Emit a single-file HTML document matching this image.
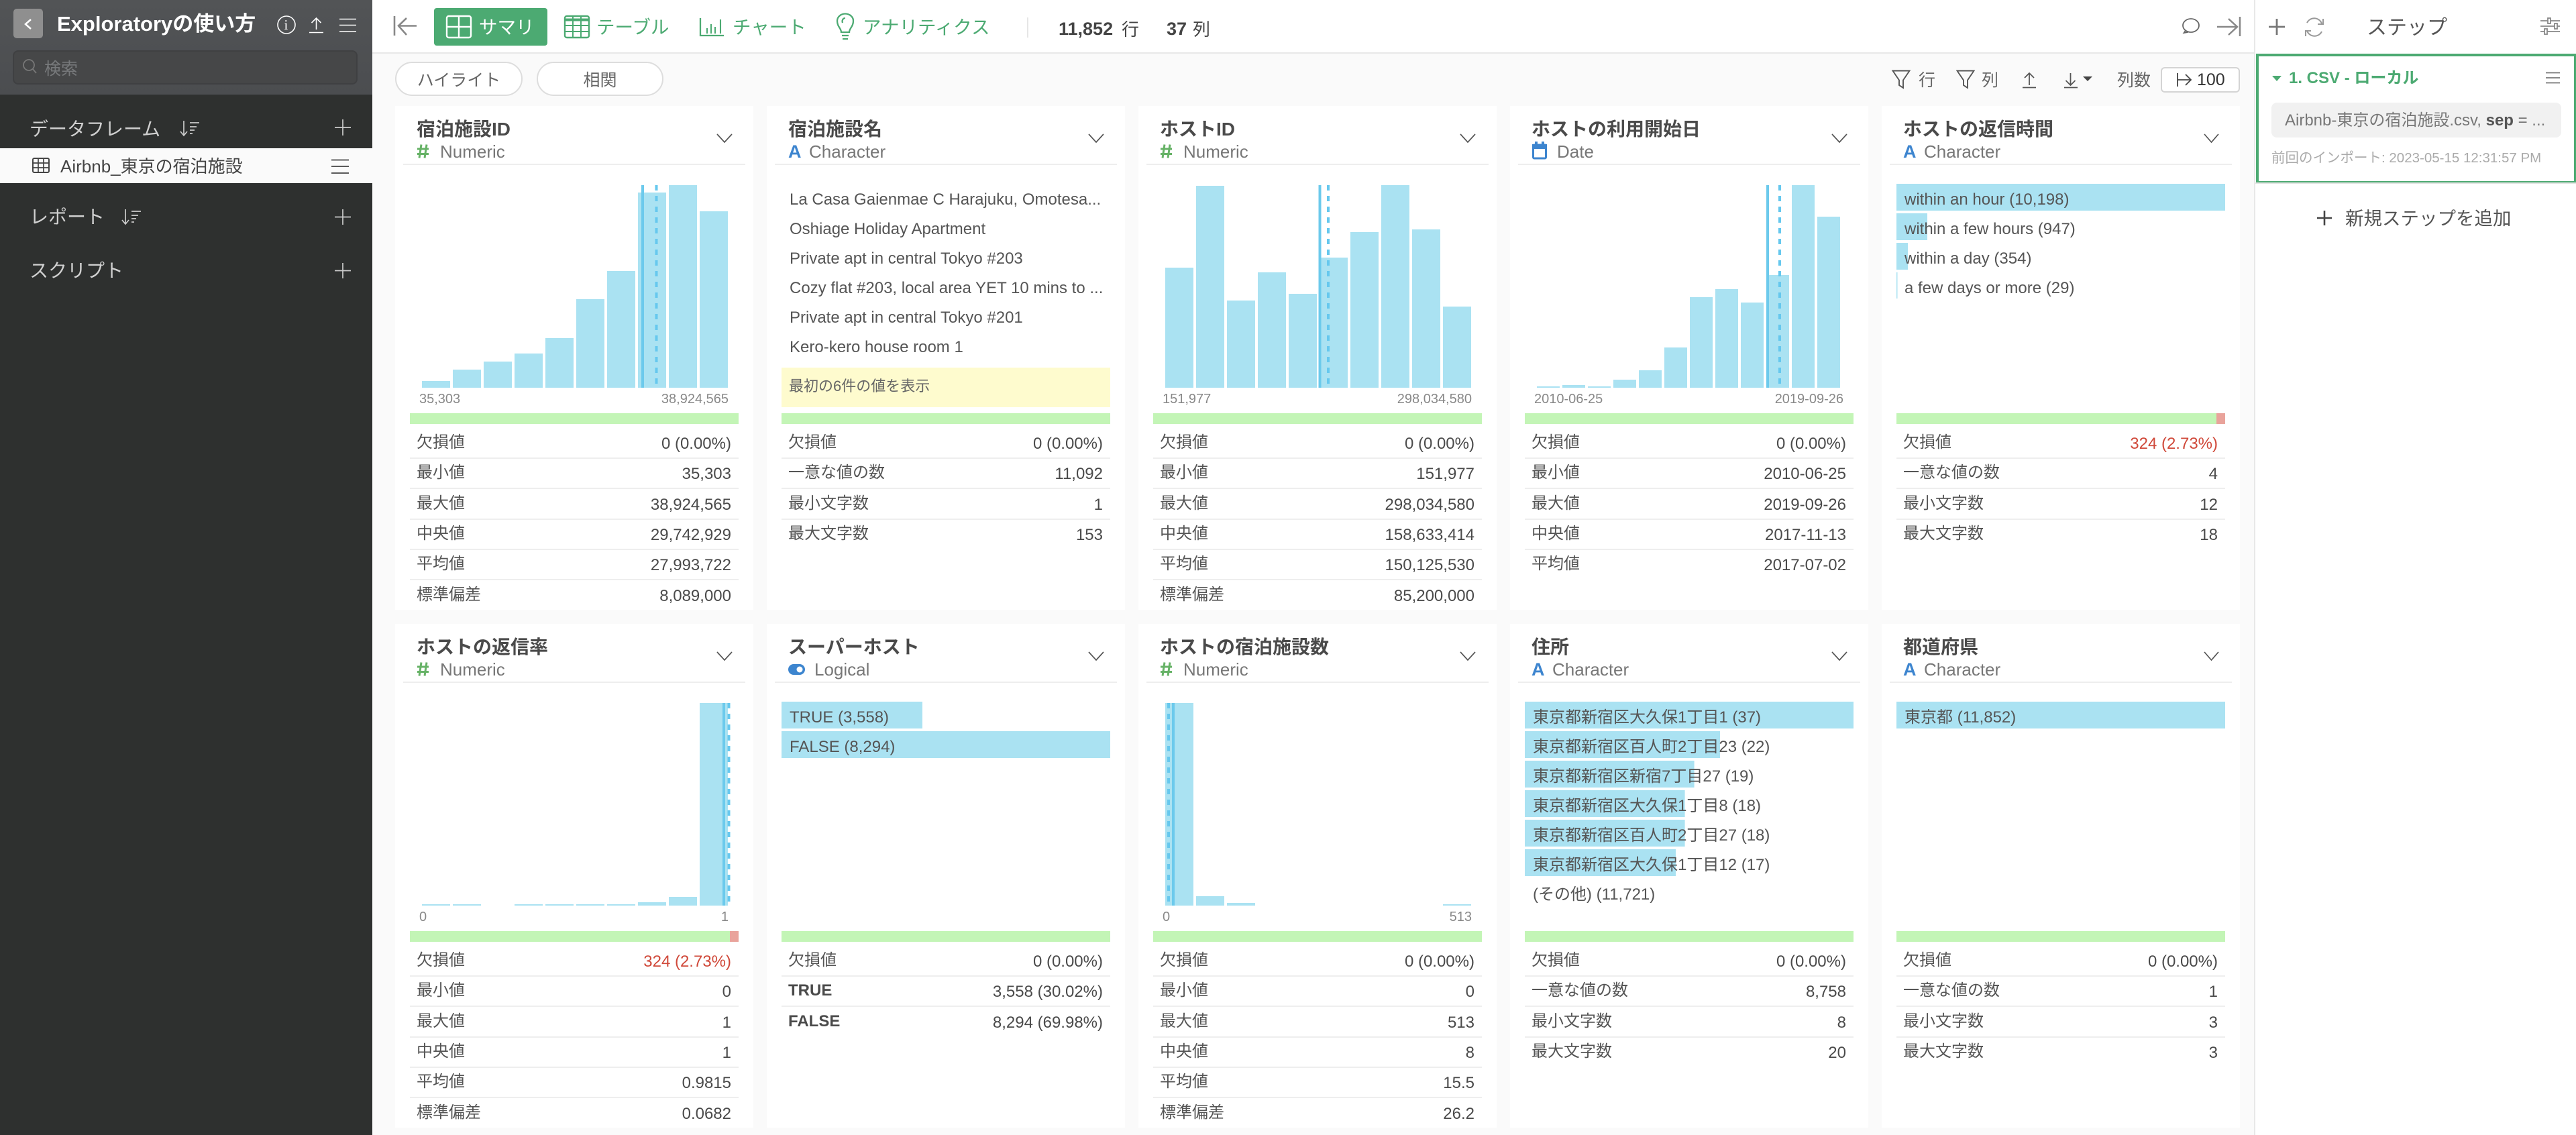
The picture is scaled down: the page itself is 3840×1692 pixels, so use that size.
<!DOCTYPE html>
<html lang="ja"><head><meta charset="utf-8"><title>Exploratory</title>
<style>
html,body{margin:0;padding:0;width:3840px;height:1692px;overflow:hidden;background:#fafafa}
body{position:relative;font-family:"Liberation Sans","Noto Sans CJK JP",sans-serif;color:#555}
.bg,.t,.c,.pill,svg.top{position:absolute}
.t{white-space:nowrap;line-height:40px}
svg.top{left:0;top:0;z-index:1}
.t,.pill,.c{z-index:2}
.c{width:534px;height:751px;background:#fff}
.c svg{position:absolute;left:0;top:0}
.c::before{content:"";position:absolute;left:12px;width:510px;top:86px;height:2px;background:#eee}
.tt{position:absolute;left:32px;top:15px;font-size:28px;font-weight:700;line-height:40px;color:#4a4a4a;white-space:nowrap}
.ty{position:absolute;top:50.5px;font-size:26px;line-height:34px;color:#777;white-space:nowrap}
.A{position:absolute;left:32px;top:50.5px;font-size:27px;line-height:34px;font-weight:700;color:#3d85cf}
.x{position:absolute;top:425px;font-size:20px;line-height:24px;color:#888;white-space:nowrap}
.x.e{right:37px}.x.s{left:36px}
.li{position:absolute;left:34px;margin-top:2px;font-size:24px;line-height:44px;color:#555;white-space:nowrap}
.y{position:absolute;left:22px;top:390px;width:479px;height:59px;padding-left:11px;background:#fefbce;font-size:22px;line-height:56px;color:#666;white-space:nowrap}
.g{position:absolute;left:22px;top:458px;width:490px;height:16px;background:#c3f5b6}
.g i{position:absolute;right:0;top:0;width:13px;height:16px;background:#e9a39b}
.r{position:absolute;left:22px;width:490px;height:45px;font-size:24px;line-height:44px;color:#4a4a4a}
.r::after{content:"";position:absolute;left:0;right:0;top:43px;height:2px;background:#eee}
.r:last-child::after{display:none}
.r span{position:absolute;left:10px;top:-1px;color:#555;white-space:nowrap}
.r b{position:absolute;left:10px;top:-1px;color:#4a4a4a}
.r u{position:absolute;right:11px;top:1px;text-decoration:none;white-space:nowrap}
.r u.red{color:#d0493a}
.a1{top:481px}.a2{top:526.3px}.a3{top:571.6px}.a4{top:617px}.a5{top:662.2px}.a6{top:707.5px}
.b{fill:#aae2f2}
.m{stroke:#6ccaec;stroke-width:4;fill:none}
.d{stroke:#66c8ee;stroke-width:4;stroke-dasharray:8 8;fill:none}
.ch{fill:none;stroke:#555;stroke-width:1.7}
.h{fill:none;stroke:#66b266;stroke-width:3;transform:translateY(-1.5px)}
.pill{top:92px;height:47px;border:2px solid #ddd;border-radius:26px;background:#fff;display:flex;align-items:center;justify-content:center;font-size:25px;color:#666;box-sizing:content-box}
</style></head><body>

<div class="bg" style="left:0;top:0;width:555px;height:1692px;background:#2e302f"></div>
<div class="bg" style="left:0;top:0;width:555px;height:141px;background:linear-gradient(#525456,#4b4d50)"></div>
<div class="bg" style="left:19px;top:75px;width:510px;height:47px;background:#464748;border:2px solid #3f4042;border-radius:8px"></div>
<div class="bg" style="left:0;top:221px;width:555px;height:52px;background:#fafafa"></div>
<div class="bg" style="left:555px;top:0;width:2805px;height:78px;background:#fff"></div>
<div class="bg" style="left:555px;top:78px;width:2808px;height:2px;background:#e8e8e8"></div>
<div class="bg" style="left:3360px;top:0;width:480px;height:1692px;background:#fff;border-left:2px solid #e8e8e8;box-sizing:border-box"></div>
<div class="bg" style="left:3363px;top:80px;width:477px;height:194px;box-sizing:border-box;border:4px solid #4caa72;background:#fff;border-right-width:3px"></div>
<div class="bg" style="left:3362px;top:272px;width:478px;height:2px;background:#e4e4e4"></div>
<div class="bg" style="left:3386px;top:153px;width:432px;height:52px;background:#f1f1f1;border-radius:8px"></div>
<div class="bg" style="left:647px;top:12px;width:169px;height:56px;background:#4caa72;border-radius:4px"></div>
<div class="bg" style="left:20px;top:13px;width:44px;height:44px;background:#8f8f8f;border-radius:5px"></div>
<div class="bg" style="left:3221px;top:100px;width:118px;height:38px;box-sizing:border-box;background:#fff;border:2px solid #d4d4d4;border-radius:6px"></div>

<svg class="top" width="3840" height="1692" viewBox="0 0 3840 1692" fill="none">
 <polyline points="46,29 38,36 46,43" stroke="#fff" stroke-width="2.5"/>
 <circle cx="427" cy="37" r="13" stroke="#fff" stroke-width="1.6"/>
 <path d="M471.5 44V27M464.5 34l7-7 7 7M461 48.5h21" stroke="#fff" stroke-width="1.6"/>
 <path d="M506 28.5h25M506 37.5h25M506 47h25" stroke="#fff" stroke-width="1.6"/>
 <circle cx="43" cy="97" r="8" stroke="#777" stroke-width="1.8"/><path d="M49 103l5 6" stroke="#777" stroke-width="1.8"/>
 <g stroke="#ccc" stroke-width="1.7">
  <path d="M274 180v22M269 196l5 6 5-6M283 183h14M283 189h10M283 194h7M283 199h4"/>
  <path d="M187 312v22M182 328l5 6 5-6M196 315h14M196 321h10M196 326h7M196 331h4"/>
  <path d="M499 190h24M511 178v24"/>
  <path d="M499 323.5h24M511 312v23"/>
  <path d="M499 403.5h24M511 392v23"/>
 </g>
 <rect x="49" y="236" width="24" height="21" rx="2" stroke="#444" stroke-width="2"/>
 <path d="M49 243h24M49 250h24M57 236v21M65 236v21" stroke="#444" stroke-width="1.7"/>
 <path d="M494 238.5h26M494 248h26M494 258h26" stroke="#444" stroke-width="1.7"/>

 <path d="M588 24v29M621 38.5h-26M606 27l-12 11.5 12 13.5" stroke="#888" stroke-width="2.6"/>
 <rect x="666" y="24" width="36" height="32" rx="3" stroke="#fff" stroke-width="2.4"/>
 <path d="M684 24v32M666 40h36" stroke="#fff" stroke-width="2.4"/>
 <rect x="842" y="24" width="36" height="32" rx="3" stroke="#4caa72" stroke-width="2.4"/>
 <path d="M842 29.5h36" stroke="#4caa72" stroke-width="4"/>
 <path d="M854 25v31M866 25v31M842 38h36M842 47h36" stroke="#4caa72" stroke-width="2"/>
 <path d="M1044 27v26h35" stroke="#4caa72" stroke-width="2.3"/>
 <path d="M1054 42v8M1060 36v14M1066 40v10M1074 29v21" stroke="#4caa72" stroke-width="2.1"/>
 <path d="M1254 48c0-6-6-8-6-17a12 10.5 0 0 1 24 0c0 9-6 11-6 17zM1255 53h10M1256 58h8M1260 27c-4 0-5 4-4 7" stroke="#4caa72" stroke-width="2.3"/>
 <path d="M1532 26v30" stroke="#ddd" stroke-width="1.5"/>

 <ellipse cx="3266" cy="38" rx="12" ry="10" stroke="#666" stroke-width="1.8"/>
 <path d="M3258 45.5l-2.5 3.5 6-1" stroke="#666" stroke-width="1.8"/>
 <path d="M3305 40h30M3322 28l13 12-13 12M3339 25v29" stroke="#888" stroke-width="2.5"/>

 <path d="M2821.5 105.5h25l-9.5 14v11.5l-6-4v-7.5z" stroke="#555" stroke-width="1.9"/>
 <path d="M2917.5 105.5h25l-9.5 14v11.5l-6-4v-7.5z" stroke="#555" stroke-width="1.9"/>
 <path d="M3025 127v-18M3018 116l7-7 7 7M3015 130.5h20" stroke="#555" stroke-width="1.8"/>
 <path d="M3086.5 109v18M3079.5 120l7 7 7-7M3077 130.5h20" stroke="#555" stroke-width="1.8"/>
 <path d="M3105 114h14l-7 7z" fill="#444"/>
 <path d="M3246 109v20M3246 119h19M3258 111l8 8-8 8" stroke="#444" stroke-width="1.8"/>

 <path d="M3382 40h24M3394 28v24" stroke="#777" stroke-width="2.8"/>
 <path d="M3461 35a12 12 0 0 0-22-1M3439 46a12 12 0 0 0 22 1M3463 28v8h-8M3437 54v-8h8" stroke="#999" stroke-width="2"/>
 <g stroke="#888" stroke-width="1.8"><path d="M3787 31h29M3787 39h29M3787 47h29"/>
  <rect x="3798" y="27" width="4" height="8" fill="#fff"/><rect x="3808" y="35" width="4" height="8" fill="#fff"/><rect x="3793" y="43" width="4" height="8" fill="#fff"/></g>
 <path d="M3387 113h14l-7 8z" fill="#4caa72"/>
 <path d="M3795 108.5h21M3795 116h21M3795 123.5h21" stroke="#777" stroke-width="1.8"/>
 <path d="M3454 325h22M3465 314v22" stroke="#444" stroke-width="2.6"/>
</svg>

<div class="t" style="left:85px;top:16px;font-size:31px;font-weight:700;color:#fff">Exploratoryの使い方</div>
<div class="t" style="left:423.5px;top:17px;font-size:21px;font-family:'Liberation Serif',serif;color:#fff">i</div>
<div class="t" style="left:66px;top:83px;font-size:25px;color:#77797b">検索</div>
<div class="t" style="left:44px;top:173px;font-size:28px;color:#d0d0d0">データフレーム</div>
<div class="t" style="left:90px;top:228px;font-size:26px;color:#444">Airbnb_東京の宿泊施設</div>
<div class="t" style="left:44px;top:304px;font-size:28px;color:#d0d0d0">レポート</div>
<div class="t" style="left:44px;top:384px;font-size:28px;color:#d0d0d0">スクリプト</div>

<div class="t" style="left:714px;top:21px;font-size:27.5px;color:#fff">サマリ</div>
<div class="t" style="left:889px;top:21px;font-size:27.5px;color:#4caa72">テーブル</div>
<div class="t" style="left:1092px;top:21px;font-size:27.5px;color:#4caa72">チャート</div>
<div class="t" style="left:1286px;top:21px;font-size:27.5px;color:#4caa72">アナリティクス</div>
<div class="t" style="left:1578px;top:23px;font-size:27px;font-weight:700;color:#444">11,852</div>
<div class="t" style="left:1672px;top:24px;font-size:26px;color:#444">行</div>
<div class="t" style="left:1739px;top:23px;font-size:27px;font-weight:700;color:#444">37</div>
<div class="t" style="left:1778px;top:24px;font-size:26px;color:#444">列</div>

<div class="pill" style="left:589px;width:186px">ハイライト</div>
<div class="pill" style="left:800px;width:185px">相関</div>
<div class="t" style="left:2860px;top:100px;font-size:25px;color:#666">行</div>
<div class="t" style="left:2954px;top:100px;font-size:25px;color:#666">列</div>
<div class="t" style="left:3156px;top:100px;font-size:25px;color:#666">列数</div>
<div class="t" style="left:3275px;top:99px;font-size:25px;color:#333">100</div>

<div class="t" style="left:3528px;top:22px;font-size:30px;color:#555">ステップ</div>
<div class="t" style="left:3412px;top:97px;font-size:24px;font-weight:700;color:#4caa72">1. CSV - ローカル</div>
<div class="t" style="left:3406px;top:160px;font-size:24px;color:#777">Airbnb-東京の宿泊施設.csv, <b style="color:#555">sep</b> = ...</div>
<div class="t" style="left:3386px;top:216px;font-size:20.5px;color:#aaa">前回のインポート: 2023-05-15 12:31:57 PM</div>
<div class="t" style="left:3496px;top:306px;font-size:27.5px;color:#555">新規ステップを追加</div>

<!-- Row 1 -->
<div class="c" style="left:589px;top:158px">
<svg width="534" height="751"><polyline class="ch" points="480,42 491,54 502,42"/>
<path class="h" d="M39 59l-3 20M47 59l-3 20M33 65.5h17M33 73h17"/>
<rect class="b" x="40" y="410" width="42" height="10"/><rect class="b" x="86" y="393" width="42" height="27"/><rect class="b" x="132" y="381" width="42" height="39"/><rect class="b" x="178" y="369" width="42" height="51"/><rect class="b" x="224" y="346" width="42" height="74"/><rect class="b" x="270" y="288" width="42" height="132"/><rect class="b" x="316" y="246" width="42" height="174"/><rect class="b" x="362" y="129" width="42" height="291"/><rect class="b" x="408" y="118" width="42" height="302"/><rect class="b" x="454" y="157" width="42" height="263"/>
<path class="m" d="M369 118v302"/><path class="d" d="M389.5 118v302"/></svg>
<div class="tt">宿泊施設ID</div><div class="ty" style="left:67px">Numeric</div>
<div class="x s">35,303</div><div class="x e">38,924,565</div><div class="g"></div>
<div class="r a1"><span>欠損値</span><u>0 (0.00%)</u></div>
<div class="r a2"><span>最小値</span><u>35,303</u></div>
<div class="r a3"><span>最大値</span><u>38,924,565</u></div>
<div class="r a4"><span>中央値</span><u>29,742,929</u></div>
<div class="r a5"><span>平均値</span><u>27,993,722</u></div>
<div class="r a6"><span>標準偏差</span><u>8,089,000</u></div>
</div>

<div class="c" style="left:1143px;top:158px">
<svg width="534" height="751"><polyline class="ch" points="480,42 491,54 502,42"/></svg>
<div class="tt">宿泊施設名</div><div class="A">A</div><div class="ty" style="left:63px">Character</div>
<div class="li" style="top:116px">La Casa Gaienmae C Harajuku, Omotesa...</div>
<div class="li" style="top:160px">Oshiage Holiday Apartment</div>
<div class="li" style="top:204px">Private apt in central Tokyo #203</div>
<div class="li" style="top:248px">Cozy flat #203, local area YET 10 mins to ...</div>
<div class="li" style="top:292px">Private apt in central Tokyo #201</div>
<div class="li" style="top:336px">Kero-kero house room 1</div>
<div class="y">最初の6件の値を表示</div><div class="g"></div>
<div class="r a1"><span>欠損値</span><u>0 (0.00%)</u></div>
<div class="r a2"><span>一意な値の数</span><u>11,092</u></div>
<div class="r a3"><span>最小文字数</span><u>1</u></div>
<div class="r a4"><span>最大文字数</span><u>153</u></div>
</div>

<div class="c" style="left:1697px;top:158px">
<svg width="534" height="751"><polyline class="ch" points="480,42 491,54 502,42"/>
<path class="h" d="M39 59l-3 20M47 59l-3 20M33 65.5h17M33 73h17"/>
<rect class="b" x="40" y="241" width="42" height="179"/><rect class="b" x="86" y="119" width="42" height="301"/><rect class="b" x="132" y="290" width="42" height="130"/><rect class="b" x="178" y="248" width="42" height="172"/><rect class="b" x="224" y="280" width="42" height="140"/><rect class="b" x="270" y="226" width="42" height="194"/><rect class="b" x="316" y="188" width="42" height="232"/><rect class="b" x="362" y="118" width="42" height="302"/><rect class="b" x="408" y="184" width="42" height="236"/><rect class="b" x="454" y="299" width="42" height="121"/>
<path class="m" d="M270.5 118v302"/><path class="d" d="M283 118v302"/></svg>
<div class="tt">ホストID</div><div class="ty" style="left:67px">Numeric</div>
<div class="x s">151,977</div><div class="x e">298,034,580</div><div class="g"></div>
<div class="r a1"><span>欠損値</span><u>0 (0.00%)</u></div>
<div class="r a2"><span>最小値</span><u>151,977</u></div>
<div class="r a3"><span>最大値</span><u>298,034,580</u></div>
<div class="r a4"><span>中央値</span><u>158,633,414</u></div>
<div class="r a5"><span>平均値</span><u>150,125,530</u></div>
<div class="r a6"><span>標準偏差</span><u>85,200,000</u></div>
</div>

<div class="c" style="left:2251px;top:158px">
<svg width="534" height="751"><polyline class="ch" points="480,42 491,54 502,42"/>
<rect x="34.5" y="58" width="19" height="20" rx="1.5" fill="#fff" stroke="#3d85cf" stroke-width="3"/>
<path d="M33 57h22v7H33zM37 53h4v5h-4zM47 53h4v5h-4z" fill="#3d85cf"/>
<rect class="b" x="40" y="418" width="34" height="2"/><rect class="b" x="78" y="416" width="34" height="4"/><rect class="b" x="116" y="418" width="34" height="2"/><rect class="b" x="154" y="408" width="34" height="12"/><rect class="b" x="192" y="394" width="34" height="26"/><rect class="b" x="230" y="360" width="34" height="60"/><rect class="b" x="268" y="285" width="34" height="135"/><rect class="b" x="306" y="273" width="34" height="147"/><rect class="b" x="344" y="293" width="34" height="127"/><rect class="b" x="382" y="252" width="34" height="168"/><rect class="b" x="420" y="118" width="34" height="302"/><rect class="b" x="458" y="165" width="34" height="255"/>
<path class="m" d="M384 118v302"/><path class="d" d="M402 118v302"/></svg>
<div class="tt">ホストの利用開始日</div><div class="ty" style="left:70px">Date</div>
<div class="x s">2010-06-25</div><div class="x e">2019-09-26</div><div class="g"></div>
<div class="r a1"><span>欠損値</span><u>0 (0.00%)</u></div>
<div class="r a2"><span>最小値</span><u>2010-06-25</u></div>
<div class="r a3"><span>最大値</span><u>2019-09-26</u></div>
<div class="r a4"><span>中央値</span><u>2017-11-13</u></div>
<div class="r a5"><span>平均値</span><u>2017-07-02</u></div>
</div>

<div class="c" style="left:2805px;top:158px">
<svg width="534" height="751"><polyline class="ch" points="481,42 491.5,54 502,42"/>
<rect class="b" x="22" y="116" width="490" height="40"/><rect class="b" x="22" y="160" width="46" height="40"/><rect class="b" x="22" y="204" width="17" height="40"/><rect class="b" x="22" y="248" width="1.5" height="39"/></svg>
<div class="tt">ホストの返信時間</div><div class="A">A</div><div class="ty" style="left:63px">Character</div>
<div class="li" style="top:116px">within an hour (10,198)</div>
<div class="li" style="top:160px">within a few hours (947)</div>
<div class="li" style="top:204px">within a day (354)</div>
<div class="li" style="top:248px">a few days or more (29)</div>
<div class="g"><i></i></div>
<div class="r a1"><span>欠損値</span><u class="red">324 (2.73%)</u></div>
<div class="r a2"><span>一意な値の数</span><u>4</u></div>
<div class="r a3"><span>最小文字数</span><u>12</u></div>
<div class="r a4"><span>最大文字数</span><u>18</u></div>
</div>

<!-- Row 2 -->
<div class="c" style="left:589px;top:930px">
<svg width="534" height="752"><polyline class="ch" points="480,42 491,54 502,42"/>
<path class="h" d="M39 59l-3 20M47 59l-3 20M33 65.5h17M33 73h17"/>
<rect class="b" x="40" y="418" width="42" height="2"/><rect class="b" x="86" y="418" width="42" height="2"/><rect class="b" x="178" y="418" width="42" height="2"/><rect class="b" x="224" y="418" width="42" height="2"/><rect class="b" x="270" y="418" width="42" height="2"/><rect class="b" x="316" y="418" width="42" height="2"/><rect class="b" x="362" y="415" width="42" height="5"/><rect class="b" x="408" y="407" width="42" height="13"/><rect class="b" x="454" y="118" width="42" height="302"/>
<path class="m" d="M490 118v302"/><path class="d" d="M497.5 118v302"/></svg>
<div class="tt">ホストの返信率</div><div class="ty" style="left:67px">Numeric</div>
<div class="x s">0</div><div class="x e">1</div><div class="g"><i></i></div>
<div class="r a1"><span>欠損値</span><u class="red">324 (2.73%)</u></div>
<div class="r a2"><span>最小値</span><u>0</u></div>
<div class="r a3"><span>最大値</span><u>1</u></div>
<div class="r a4"><span>中央値</span><u>1</u></div>
<div class="r a5"><span>平均値</span><u>0.9815</u></div>
<div class="r a6"><span>標準偏差</span><u>0.0682</u></div>
</div>

<div class="c" style="left:1143px;top:930px">
<svg width="534" height="752"><polyline class="ch" points="480,42 491,54 502,42"/>
<rect x="32" y="60" width="25" height="16" rx="8" fill="#3d85cf"/><circle cx="49" cy="68" r="4.5" fill="#fff"/>
<rect class="b" x="22" y="116" width="210" height="40"/><rect class="b" x="22" y="160" width="490" height="40"/></svg>
<div class="tt">スーパーホスト</div><div class="ty" style="left:71px">Logical</div>
<div class="li" style="top:116px">TRUE (3,558)</div>
<div class="li" style="top:160px">FALSE (8,294)</div>
<div class="g"></div>
<div class="r a1"><span>欠損値</span><u>0 (0.00%)</u></div>
<div class="r a2"><b>TRUE</b><u>3,558 (30.02%)</u></div>
<div class="r a3"><b>FALSE</b><u>8,294 (69.98%)</u></div>
</div>

<div class="c" style="left:1697px;top:930px">
<svg width="534" height="752"><polyline class="ch" points="480,42 491,54 502,42"/>
<path class="h" d="M39 59l-3 20M47 59l-3 20M33 65.5h17M33 73h17"/>
<rect class="b" x="40" y="118" width="42" height="302"/><rect class="b" x="86" y="406" width="42" height="14"/><rect class="b" x="132" y="416" width="42" height="4"/><rect class="b" x="454" y="418" width="42" height="2"/>
<path class="d" d="M45 118v302"/><path class="m" d="M52 118v302"/></svg>
<div class="tt">ホストの宿泊施設数</div><div class="ty" style="left:67px">Numeric</div>
<div class="x s">0</div><div class="x e">513</div><div class="g"></div>
<div class="r a1"><span>欠損値</span><u>0 (0.00%)</u></div>
<div class="r a2"><span>最小値</span><u>0</u></div>
<div class="r a3"><span>最大値</span><u>513</u></div>
<div class="r a4"><span>中央値</span><u>8</u></div>
<div class="r a5"><span>平均値</span><u>15.5</u></div>
<div class="r a6"><span>標準偏差</span><u>26.2</u></div>
</div>

<div class="c" style="left:2251px;top:930px">
<svg width="534" height="752"><polyline class="ch" points="480,42 491,54 502,42"/>
<rect class="b" x="22" y="116" width="490" height="40"/><rect class="b" x="22" y="160" width="291" height="40"/><rect class="b" x="22" y="204" width="252.6" height="40"/><rect class="b" x="22" y="248" width="238.6" height="40"/><rect class="b" x="22" y="292" width="238.6" height="40"/><rect class="b" x="22" y="336" width="225" height="40"/></svg>
<div class="tt">住所</div><div class="A">A</div><div class="ty" style="left:63px">Character</div>
<div class="li" style="top:116px">東京都新宿区大久保1丁目1 (37)</div>
<div class="li" style="top:160px">東京都新宿区百人町2丁目23 (22)</div>
<div class="li" style="top:204px">東京都新宿区新宿7丁目27 (19)</div>
<div class="li" style="top:248px">東京都新宿区大久保1丁目8 (18)</div>
<div class="li" style="top:292px">東京都新宿区百人町2丁目27 (18)</div>
<div class="li" style="top:336px">東京都新宿区大久保1丁目12 (17)</div>
<div class="li" style="top:380px">(その他) (11,721)</div>
<div class="g"></div>
<div class="r a1"><span>欠損値</span><u>0 (0.00%)</u></div>
<div class="r a2"><span>一意な値の数</span><u>8,758</u></div>
<div class="r a3"><span>最小文字数</span><u>8</u></div>
<div class="r a4"><span>最大文字数</span><u>20</u></div>
</div>

<div class="c" style="left:2805px;top:930px">
<svg width="534" height="752"><polyline class="ch" points="481,42 491.5,54 502,42"/>
<rect class="b" x="22" y="116" width="490" height="40"/></svg>
<div class="tt">都道府県</div><div class="A">A</div><div class="ty" style="left:63px">Character</div>
<div class="li" style="top:116px">東京都 (11,852)</div>
<div class="g"></div>
<div class="r a1"><span>欠損値</span><u>0 (0.00%)</u></div>
<div class="r a2"><span>一意な値の数</span><u>1</u></div>
<div class="r a3"><span>最小文字数</span><u>3</u></div>
<div class="r a4"><span>最大文字数</span><u>3</u></div>
</div>
</body></html>
